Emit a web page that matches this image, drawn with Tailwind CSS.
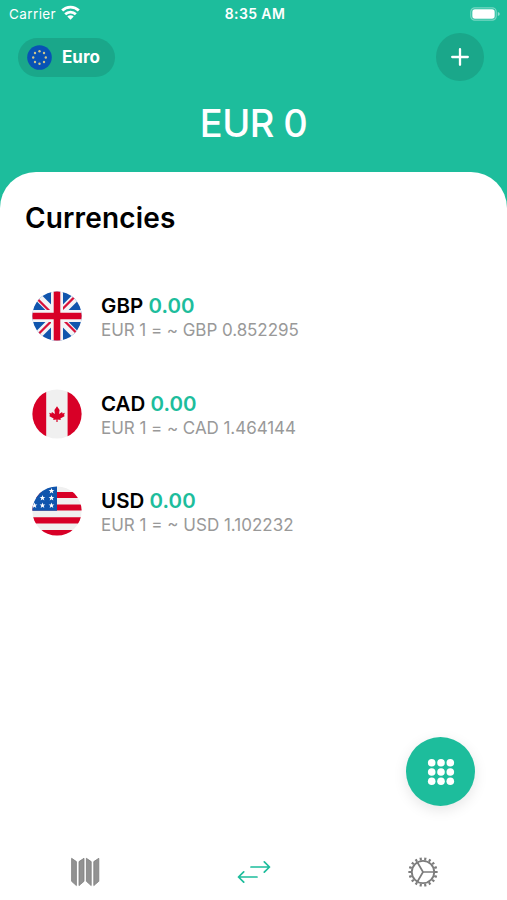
<!DOCTYPE html>
<html lang="en">
<head>
<meta charset="utf-8">
<title>Currencies</title>
<script src="https://cdn.jsdelivr.net/npm/@tailwindcss/browser@4"></script>
</head>
<body class="bg-white">
<div class="relative w-[507px] h-[900px] overflow-hidden bg-white font-['Inter','Liberation_Sans',sans-serif] flex flex-col">
  <header class="bg-[#1dbd9c] h-[212px] shrink-0 text-white">
    <div class="h-7 grid grid-cols-3 items-center pl-[9px] pr-[6px]">
      <div class="flex items-center gap-[5px]">
        <span class="text-[13.5px] leading-7 tracking-[0.4px]">Carrier</span>
        <svg class="-mt-[3px]" width="19" height="15" viewBox="0 0 19 15" fill="none" stroke="#fff" stroke-width="2.8"><path d="M1.200 5.600a11.700 11.700 0 0 1 16.600 0"/><path d="M4.200 9.200a7.600 7.600 0 0 1 10.600 0"/><path d="M9.500 14.800 6.300 11.600a4.500 4.500 0 0 1 6.400 0Z" fill="#fff" stroke="none"/></svg>
      </div>
      <span class="text-center text-[14px] leading-7 font-semibold tracking-[0.4px]">8:35 AM</span>
      <svg class="justify-self-end -mt-px" width="31" height="14" viewBox="0 0 31 14"><rect x=".8" y=".8" width="25.4" height="12.4" rx="4" fill="none" stroke="#fff" stroke-opacity=".4" stroke-width="1.2"/><rect x="2.3" y="2.3" width="22.4" height="9.4" rx="2.6" fill="#fff"/><path d="M27.8 5v4q2-.6 2-2t-2-2Z" fill="#fff" fill-opacity=".5"/></svg>
    </div>
    <div class="flex justify-between items-center h-12 mt-[5px] pl-[18px] pr-[23px]">
      <div class="flex items-center h-[39px] w-[97px] rounded-full bg-[#1aa78a] pl-[9px] gap-[10px]">
        <svg width="25" height="25" viewBox="0 0 25 25"><circle cx="12.5" cy="12.5" r="12.3" fill="#0852b5"/><g fill="#cfc58c"><circle cx="12.5" cy="6.2" r="1.2"/><circle cx="17" cy="8" r="1.2"/><circle cx="18.8" cy="12.5" r="1.2"/><circle cx="17" cy="17" r="1.2"/><circle cx="12.5" cy="18.8" r="1.2"/><circle cx="8" cy="17" r="1.2"/><circle cx="6.2" cy="12.5" r="1.2"/><circle cx="8" cy="8" r="1.2"/></g></svg>
        <span class="text-[17px] font-bold pt-[2px]">Euro</span>
      </div>
      <div class="size-12 rounded-full bg-[#1aa78a] flex items-center justify-center">
        <svg width="18" height="18" viewBox="0 0 18 18" stroke="#fff" stroke-width="2.3" stroke-linecap="round"><path d="M9 1.2v15.6M1.2 9h15.6"/></svg>
      </div>
    </div>
    <div class="mt-[19px] text-center text-[38px] leading-[46px] font-medium tracking-[-0.6px]">EUR 0</div>
  </header>
  <main class="-mt-10 rounded-t-[36px] bg-white flex-1 pt-[26px]">
    <h1 class="pl-[25px] text-[28px] leading-10 font-semibold tracking-[0.15px]">Currencies</h1>
    <ul class="mt-[29px] pl-[32px]">
      <li class="flex items-center gap-[19px] h-[97.7px]">
        <svg width="50" height="50" viewBox="0 0 50 50"><clipPath id="c1"><circle cx="25" cy="25" r="24.6"/></clipPath><g clip-path="url(#c1)"><path fill="#1055ad" d="M0 0h50v50H0z"/><path d="M3 3 47 47M47 3 3 47" stroke="#f4f4f6" stroke-width="8"/><path d="M5 7.5 20 22.5M29.5 19 45 3.5M20 29.5 4 45.5M30 27.5 46 43.5" stroke="#d8113a" stroke-width="2.3"/><path d="M25 0v50M0 25h50" stroke="#f4f4f6" stroke-width="12"/><path d="M25 0v50M0 25h50" stroke="#d80027" stroke-width="6.6"/></g></svg>
        <div class="pt-[5px]"><div class="text-[20.5px] leading-6 font-semibold tracking-[0.05px]">GBP <span class="text-[#1dbd9c]">0.00</span></div><div class="text-[17px] leading-6 tracking-[-0.06px] text-[#999]">EUR 1 = ~ GBP 0.852295</div></div>
      </li>
      <li class="flex items-center gap-[19px] h-[97.7px]">
        <svg width="50" height="50" viewBox="0 0 50 50"><clipPath id="c2"><circle cx="25" cy="25" r="24.6"/></clipPath><g clip-path="url(#c2)"><path fill="#f0f0f0" d="M0 0h50v50H0z"/><path fill="#d80027" d="M0 0h14.2v50H0zM35.6 0H50v50H35.6z"/><path fill="#d80027" d="m25 17.2 2.6 3.9-.5 3.8 3-1.8.4 1.5 2.3-.8-.8 2.5.9.7-4.5 2.5.4 1.6-3.2-.5v2.5h-1.2v-2.5l-3.2.5.4-1.6-4.5-2.5.9-.7-.8-2.5 2.3.8.4-1.5 3 1.8-.5-3.8Z"/></g></svg>
        <div class="pt-[4px]"><div class="text-[20.5px] leading-6 font-semibold">CAD <span class="text-[#1dbd9c]">0.00</span></div><div class="text-[17px] leading-6 tracking-[-0.05px] text-[#999]">EUR 1 = ~ CAD 1.464144</div></div>
      </li>
      <li class="flex items-center gap-[19px] h-[97.7px]">
        <svg width="50" height="50" viewBox="0 0 50 50"><clipPath id="c3"><circle cx="25" cy="25" r="24.6"/></clipPath><g clip-path="url(#c3)"><path fill="#f0f0f0" d="M0 0h50v50H0z"/><path fill="#d80027" d="M0 6h50v6H0zM0 18.4h50v6.2H0zM0 31.2h50v6.2H0zM0 44h50v6H0z"/><path fill="#1055ad" d="M0 0h25v24.8H0z"/><defs><path id="s" d="m0-3 .75 2h2.1L1.2.3l.6 2.1L0 1.2l-1.8 1.2.6-2.1L-2.85-1h2.1Z" fill="#fff"/></defs><use href="#s" x="19.5" y="5"/><use href="#s" x="10.5" y="12"/><use href="#s" x="19.5" y="12"/><use href="#s" x="2.5" y="19.5"/><use href="#s" x="10.5" y="19.5"/><use href="#s" x="19.5" y="19.5"/></g></svg>
        <div class="pt-[4px]"><div class="text-[20.5px] leading-6 font-semibold tracking-[0.05px]">USD <span class="text-[#1dbd9c]">0.00</span></div><div class="text-[17px] leading-6 text-[#999]">EUR 1 = ~ USD 1.102232</div></div>
      </li>
    </ul>
  </main>
  <button class="absolute left-[406px] top-[737px] size-[69px] rounded-full bg-[#1dbd9c] shadow-[0_4px_14px_rgba(0,0,0,0.1)] flex items-center justify-center" aria-label="Keypad">
    <svg width="28" height="28" viewBox="0 0 28 28" fill="#fff"><circle cx="4.7" cy="4.7" r="3.8"/><circle cx="14" cy="4.7" r="3.8"/><circle cx="23.3" cy="4.7" r="3.8"/><circle cx="4.7" cy="14" r="3.8"/><circle cx="14" cy="14" r="3.8"/><circle cx="23.3" cy="14" r="3.8"/><circle cx="4.7" cy="23.3" r="3.8"/><circle cx="14" cy="23.3" r="3.8"/><circle cx="23.3" cy="23.3" r="3.8"/></svg>
  </button>
  <nav class="grid grid-cols-3 h-14 shrink-0 items-center justify-items-center">
    <svg width="30" height="30" viewBox="0 0 30 30" fill="#929292" stroke="#7d7d7d" stroke-width=".8" stroke-linejoin="round"><path d="m1.6 1.3 4.8 3.3v24l-4.8-4.3ZM9 4.6l5-3.3v23l-5 4.3ZM16.4 1.3l4.8 3.3v24l-4.8-4.3ZM23.8 4.6l5-3.3v23l-5 4.3Z"/></svg>
    <svg width="34" height="24" viewBox="0 0 34 24" fill="none" stroke="#1dbd9c" stroke-width="1.7" stroke-linecap="round" stroke-linejoin="round"><path d="M14 7h18.5M27.3 1.8 32.5 7 27.3 12.2M20 17H1.5M6.7 11.8 1.5 17 6.7 22.2"/></svg>
    <svg width="32" height="32" viewBox="0 0 32 32" fill="none" stroke="#7d7d7d"><circle cx="16" cy="16" r="11.2" stroke-width="1.8"/><circle cx="16" cy="16" r="13.3" stroke-width="2.7" pathLength="180" stroke-dasharray="4.6 5.4" stroke-dashoffset="2.3"/><path d="M16 16h11M16 16l-5.5-9.5M16 16l-5.5 9.5" stroke-width="1.7"/></svg>
  </nav>
</div>
</body>
</html>
